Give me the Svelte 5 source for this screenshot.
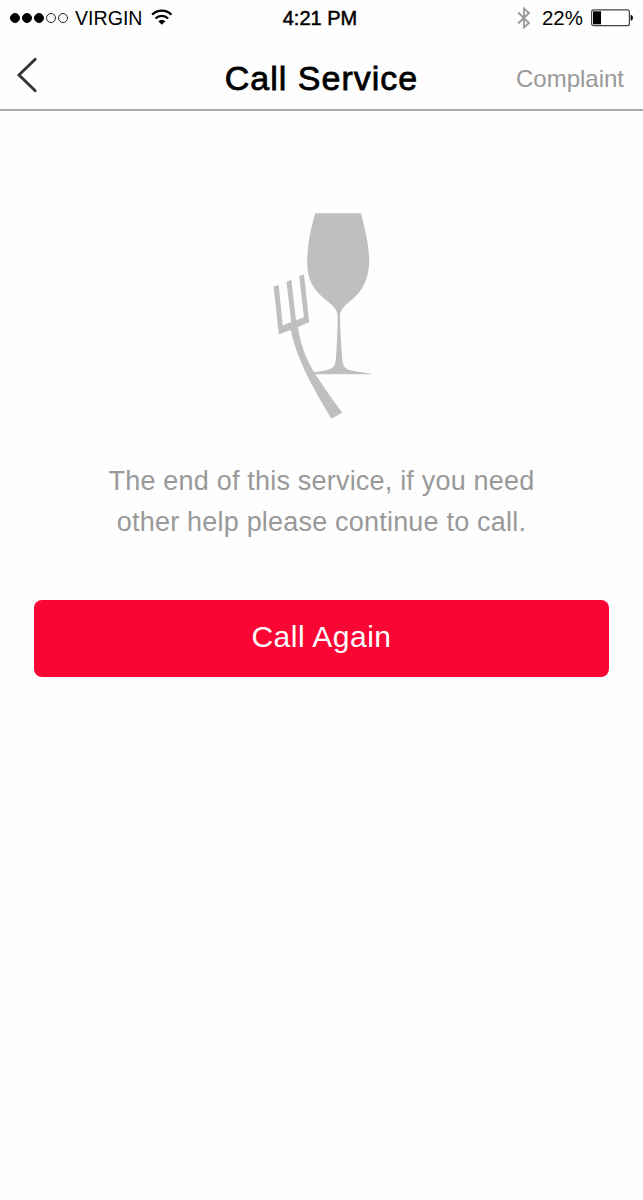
<script>
  let carrier = 'VIRGIN';
  let time = '4:21 PM';
  let battery = 22;
  let signal = [true, true, true, false, false];
</script>

<div class="screen">
  <div class="status">
    <div class="left">
      <div class="dots">
        {#each signal as on}
          <span class="dot" class:on></span>
        {/each}
      </div>
      <span class="carrier">{carrier}</span>
      <svg class="wifi" width="22" height="18" viewBox="0 0 22 18">
        <path d="M1.2 5.700C6.600 .3 15 .3 20.400 5.700" fill="none" stroke="#000" stroke-width="2.4" />
        <path d="M4.500 9.500C8.100 5.900 13.500 5.900 17.100 9.500" fill="none" stroke="#000" stroke-width="2.300" />
        <path d="M7.300 12.200Q10.800 9.200 14.300 12.200L10.800 15.800Z" />
      </svg>
    </div>
    <span class="time">{time}</span>
    <div class="right">
      <svg class="bluetooth" width="14" height="24" viewBox="0 0 14 24">
        <path d="M1.200 6.500L12 17L7 21.500V2.500L12 7L1.200 17.500" fill="none" stroke="#999" stroke-width="1.800" />
      </svg>
      <span class="percent">{battery}%</span>
      <svg class="battery" width="42" height="18" viewBox="0 0 42 18">
        <rect x=".6" y=".9" width="37.800" height="15.800" rx="2" fill="#fff" stroke="#444" stroke-width="1.200" />
        <rect x="2" y="2.300" width={battery * 0.365} height="13" />
        <path d="M39.600 5.800Q42 6.200 42 8.800T39.600 11.800Z" />
      </svg>
    </div>
  </div>

  <header>
    <button class="back" aria-label="Back">
      <svg width="22" height="36" viewBox="0 0 22 36">
        <path d="M19.200 2.200L3 18L19.200 33.700" fill="none" stroke="#333" stroke-width="2.900" stroke-linecap="round" />
      </svg>
    </button>
    <h1>Call Service</h1>
    <button class="complaint">Complaint</button>
  </header>

  <main>
    <svg class="logo" width="100" height="208" viewBox="0 0 100 208" fill="#bfbfbf">
      <path d="M43.200 1.200H89C93 17 97.200 33 97.200 49C97.200 67 90 80 79 88.500C71 95 68.200 98 68 104C68 118 69.400 134 70.400 148C71 156 74 157.500 83 159.300L99.300 161.800V162.300H34V161.500C58 158 63.200 158 63.800 147C64.900 134 65.700 118 65.500 104C65.300 98 62.500 95 54 88C41 78 34.900 67 35.200 49C35.500 31 39 16 43.200 1.200Z" />
      <path d="M1.600 74.600L6.700 72.900L10.700 113.200L19.200 110L14.500 69.700L19.300 67.700L24 108.200L31.900 105.300L27.300 64L32 62.200L37.200 110.300L26 115C28 131 34 147 42 160C52 176 61 188 70.300 200.800L59.400 206.800C50 191 40 174 32.500 158C26 144 22 132 18.600 118L6.800 122.500Z" />
    </svg>
    <p>The end of this service, if you need<br />other help please continue to call.</p>
    <button class="call">Call Again</button>
  </main>
</div>

<style>
  :global(body) {
    margin: 0;
    background: #fefefe;
  }

  .screen {
    min-height: 1200px;
    font-family: 'Liberation Sans', Arial, sans-serif;
    color: #000;
  }

  button {
    padding: 0;
    border: none;
    background: none;
    font-family: inherit;
    cursor: pointer;
  }

  svg {
    display: block;
  }

  .status {
    display: grid;
    grid-template-columns: 1fr auto 1fr;
    align-items: center;
    height: 36px;
    padding: 0 10px;
  }

  .left,
  .right,
  .dots {
    display: flex;
    align-items: center;
  }

  .right {
    justify-content: flex-end;
  }

  .dots {
    gap: 2px;
  }

  .dot {
    box-sizing: border-box;
    width: 10px;
    height: 10px;
    border: 1px solid #222;
    border-radius: 50%;
  }

  .dot.on {
    border-color: #000;
    background: #000;
  }

  .carrier {
    margin-left: 7px;
    font-size: 19.6px;
  }

  .wifi {
    margin-left: 8px;
  }

  .time {
    margin-right: 3px;
    font-size: 20px;
    -webkit-text-stroke: 0.5px #000;
  }

  .percent {
    margin: 0 8px 0 11px;
    font-size: 20.5px;
  }

  header {
    display: grid;
    grid-template-columns: 1fr auto 1fr;
    align-items: center;
    height: 73px;
    padding: 0 19px 0 16px;
    border-bottom: 2px solid #aaa;
  }

  .back {
    justify-self: start;
    margin-top: 4px;
  }

  h1 {
    margin: 11px 0 0 3px;
    font-size: 34px;
    font-weight: normal;
    letter-spacing: 1px;
    line-height: 40px;
    -webkit-text-stroke: 0.8px #000;
  }

  .complaint {
    justify-self: end;
    margin-top: 13px;
    color: #999;
    font-size: 24px;
    line-height: 28px;
  }

  main {
    display: flex;
    flex-direction: column;
    padding: 101px 34px 0;
  }

  .logo {
    align-self: center;
  }

  p {
    margin: 41px 0 0;
    color: #999;
    font-size: 27px;
    letter-spacing: 0.200px;
    line-height: 41px;
    text-align: center;
  }

  .call {
    height: 77px;
    margin-top: 57px;
    padding-bottom: 4px;
    border-radius: 8px;
    background: #fb0534;
    color: #fff;
    font-size: 30px;
    letter-spacing: 0.500px;
  }
</style>
